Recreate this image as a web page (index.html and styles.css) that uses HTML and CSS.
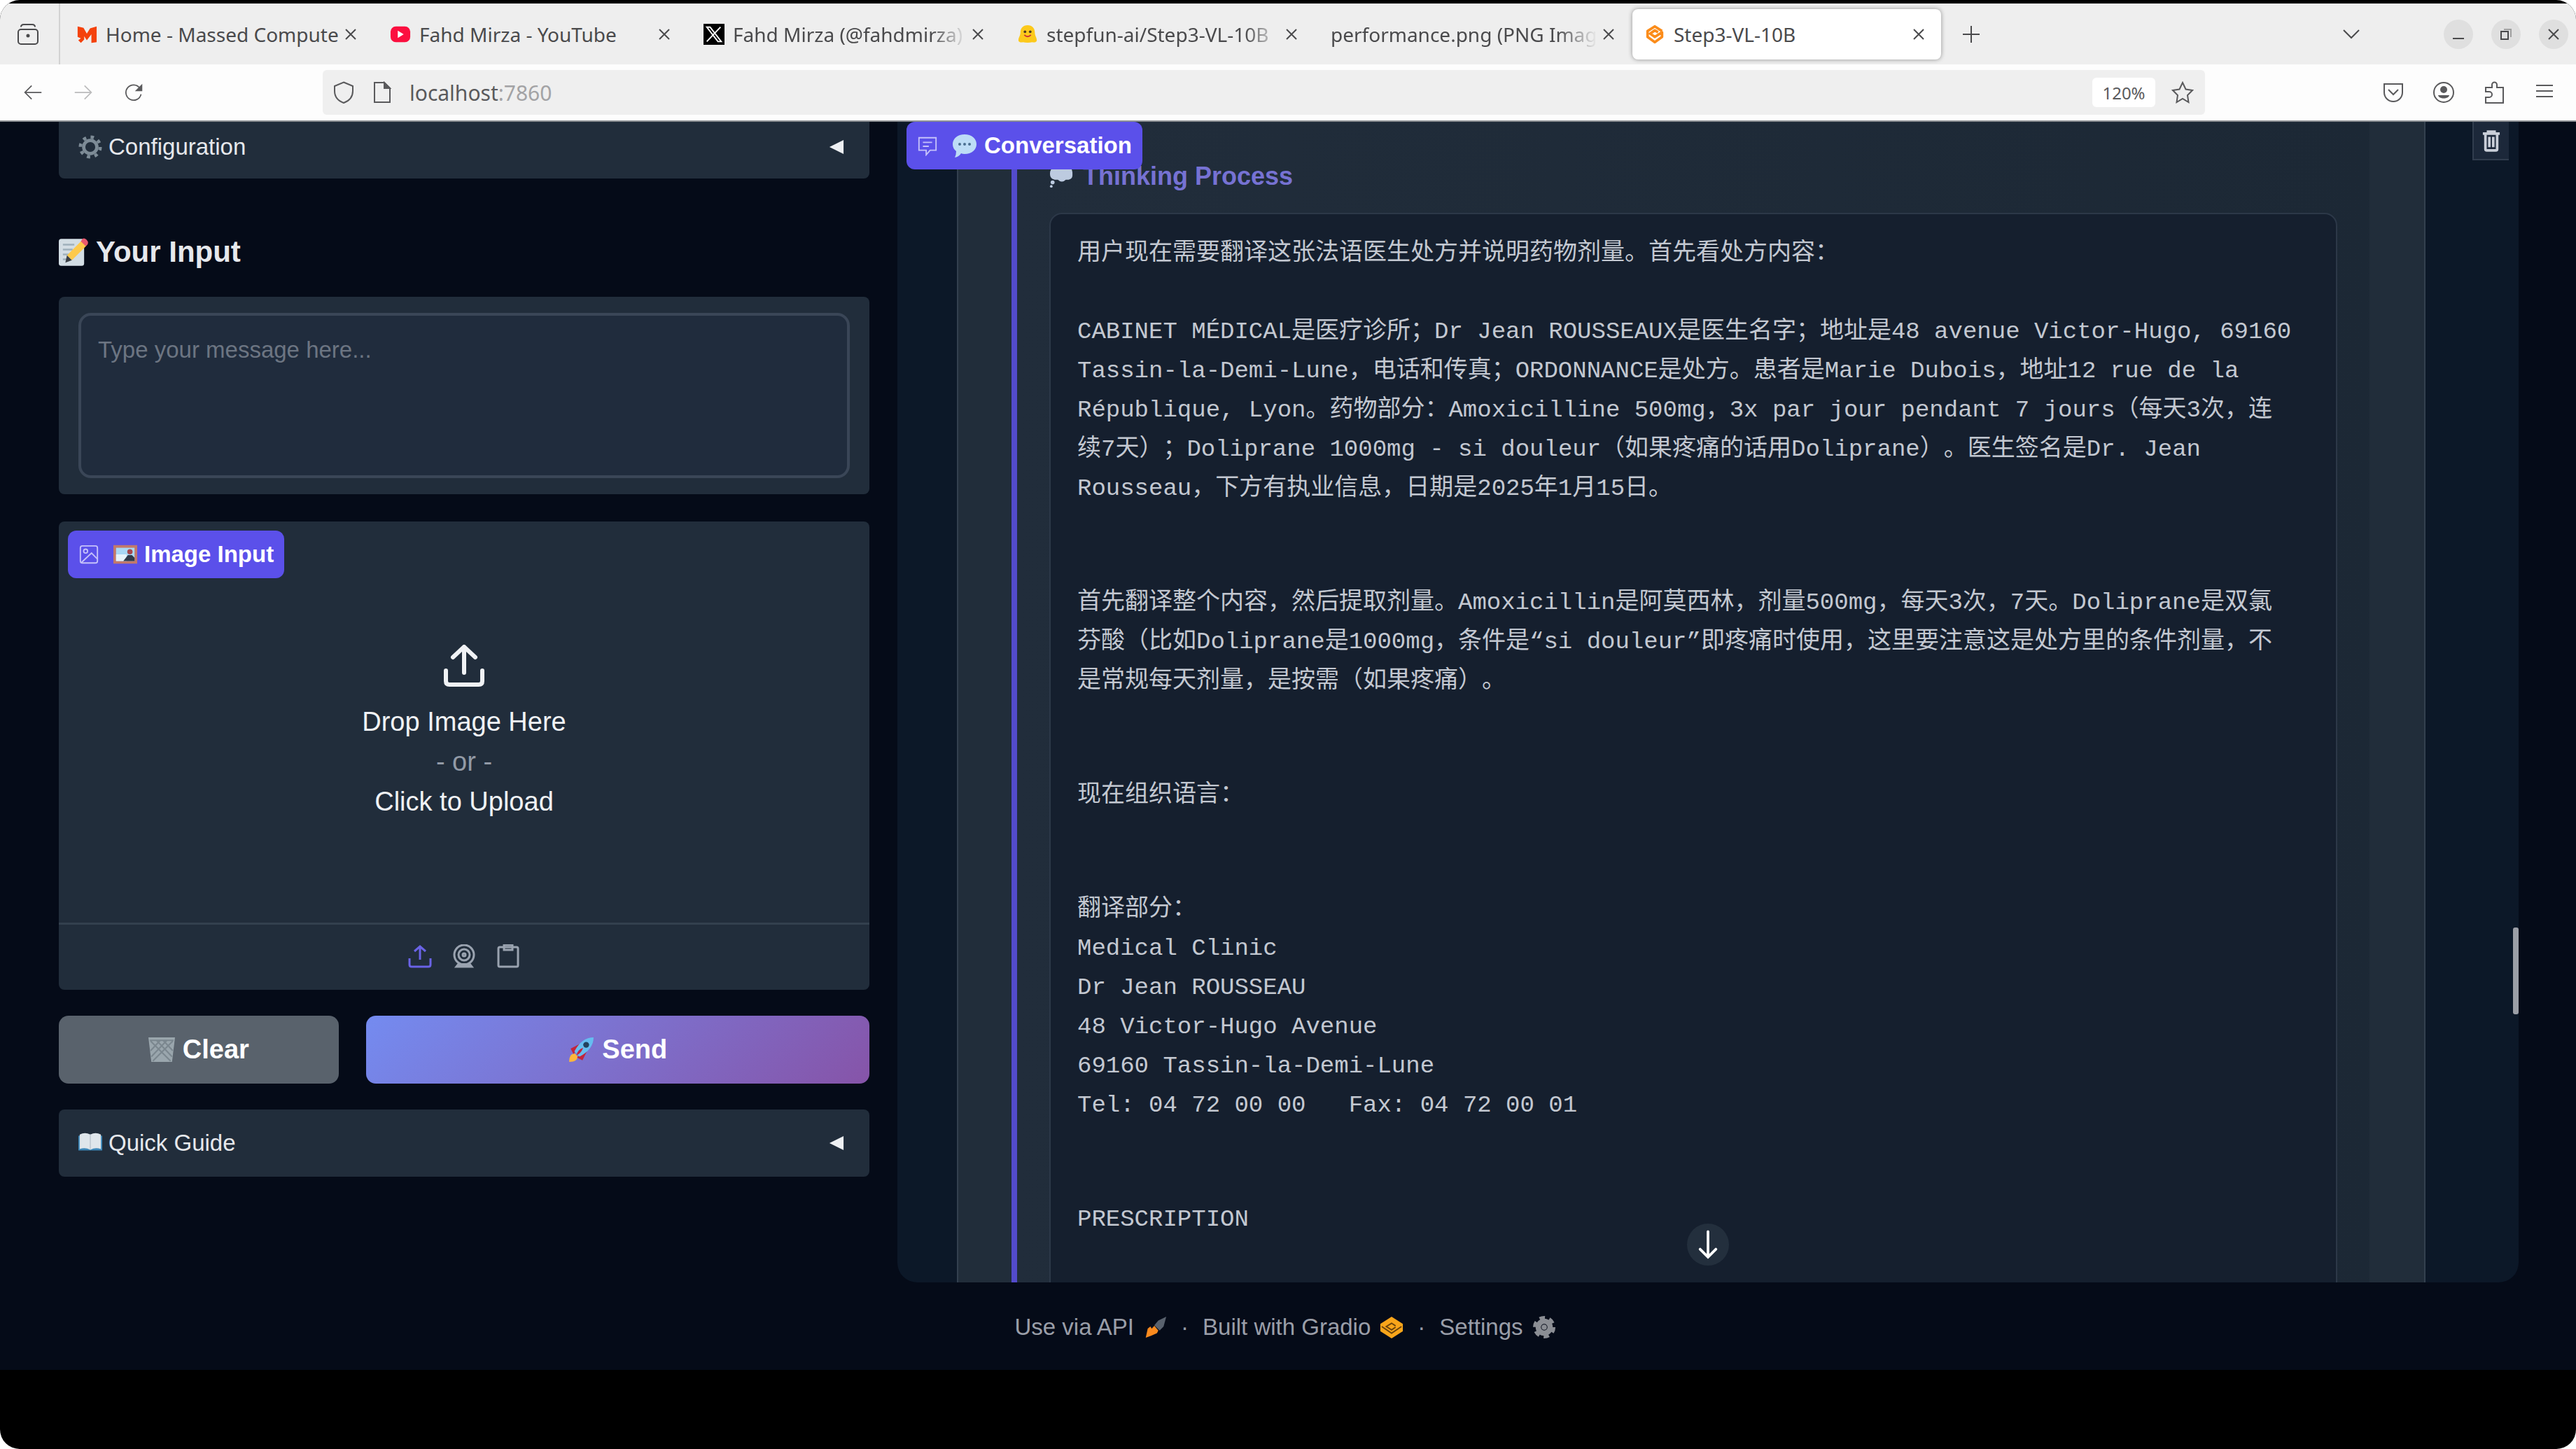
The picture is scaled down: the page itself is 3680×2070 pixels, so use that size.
FILE: index.html
```html
<!DOCTYPE html>
<html lang="en">
<head>
  <meta charset="UTF-8">
  <title>Step3-VL-10B</title>
  <meta name="viewport" content="width=device-width, initial-scale=1.0">
  <link rel="stylesheet" href="styles.css">
</head>
<body>
<div class="screen">

  <!-- Browser tabs -->
  <nav class="tab-bar">
    <button class="view-btn" aria-label="Recent browsing">
      <svg class="icon" viewBox="0 0 32 32"><rect x="2" y="9" width="28" height="21" rx="4"/><path d="M6 5.500Q6 2 10 2h12q4 0 4 3.500"/><circle cx="16" cy="18" r="1.500" fill="currentColor"/></svg>
    </button>
    <div class="tabs">
      <div class="tab">
        <svg class="favicon" viewBox="0 0 32 32"><path fill="#f4420c" d="M2 4l9 2 5 9 5-8 10-3v24l-8 1V16l-7 9-4-6v5l-5 5-4-4 4-3-5-2z"/></svg>
        <span class="tab-title">Home - Massed Compute</span>
        <button class="tab-close" aria-label="Close tab"><svg class="icon" viewBox="0 0 16 16"><path d="M1 1l14 14M15 1L1 15"/></svg></button>
      </div>
      <div class="tab">
        <svg class="favicon" viewBox="0 0 32 32"><rect x="1" y="4" width="30" height="24" rx="8" fill="#fb0f3f"/><path fill="#fff" d="M12 10.500v11l9-5.500z"/></svg>
        <span class="tab-title">Fahd Mirza - YouTube</span>
        <button class="tab-close" aria-label="Close tab"><svg class="icon" viewBox="0 0 16 16"><path d="M1 1l14 14M15 1L1 15"/></svg></button>
      </div>
      <div class="tab">
        <svg class="favicon" viewBox="0 0 32 32"><rect width="32" height="32"/><path fill="none" stroke="#fff" stroke-width="2" d="M5 5h5l17 22h-5zM26 5L5 27"/></svg>
        <span class="tab-title fade">Fahd Mirza (@fahdmirza)</span>
        <button class="tab-close" aria-label="Close tab"><svg class="icon" viewBox="0 0 16 16"><path d="M1 1l14 14M15 1L1 15"/></svg></button>
      </div>
      <div class="tab">
        <svg class="favicon" viewBox="0 0 32 32"><path fill="#fcc91b" d="M16 2c7 0 11 5 11 11 0 5 3 8 3 12 0 3-4 4-7 3-4 1-10 1-14 0-3 1-7 0-7-3 0-4 3-7 3-12C5 7 9 2 16 2z"/><circle cx="12" cy="12" r="2" fill="#4a3a20"/><circle cx="20" cy="12" r="2" fill="#4a3a20"/><path d="M11 17q5 5 10 0" fill="none" stroke="#c33" stroke-width="2"/></svg>
        <span class="tab-title fade">stepfun-ai/Step3-VL-10B</span>
        <button class="tab-close" aria-label="Close tab"><svg class="icon" viewBox="0 0 16 16"><path d="M1 1l14 14M15 1L1 15"/></svg></button>
      </div>
      <div class="tab">
        <span class="tab-title fade">performance.png (PNG Imag</span>
        <button class="tab-close" aria-label="Close tab"><svg class="icon" viewBox="0 0 16 16"><path d="M1 1l14 14M15 1L1 15"/></svg></button>
      </div>
      <div class="tab active">
        <svg class="favicon" viewBox="0 0 32 32"><path fill="none" stroke="#fb8c1a" stroke-width="4" stroke-linejoin="round" d="M27 11L16 4 5 11v9l11 8 11-8v-7l-11 7-7-5 7-5 5 3"/></svg>
        <span class="tab-title">Step3-VL-10B</span>
        <button class="tab-close" aria-label="Close tab"><svg class="icon" viewBox="0 0 16 16"><path d="M1 1l14 14M15 1L1 15"/></svg></button>
      </div>
    </div>
    <button class="new-tab" aria-label="New tab"><svg class="icon" viewBox="0 0 24 24"><path d="M12 0v24M0 12h24"/></svg></button>
    <div class="window-btns">
      <button class="list-tabs" aria-label="List all tabs"><svg class="icon" viewBox="0 0 24 14"><path d="M1 1l11 11L23 1"/></svg></button>
      <button class="round" aria-label="Minimize"><svg class="icon" viewBox="0 0 16 16"><path d="M0 14h16"/></svg></button>
      <button class="round" aria-label="Restore"><svg class="icon" viewBox="0 0 16 16"><path d="M1 4h10v11H1z"/><path stroke="#a0a0a0" d="M5 1h10v11"/></svg></button>
      <button class="round" aria-label="Close"><svg class="icon" viewBox="0 0 16 16"><path d="M1 1l14 14M15 1L1 15"/></svg></button>
    </div>
  </nav>

  <!-- Address bar -->
  <div class="toolbar">
    <div class="nav-btns">
      <button aria-label="Back"><svg class="icon" viewBox="0 0 32 32"><path d="M30 16H3M14 5L3 16l11 11"/></svg></button>
      <button aria-label="Forward" disabled><svg class="icon" viewBox="0 0 32 32"><path d="M2 16h27M18 5l11 11-11 11"/></svg></button>
      <button aria-label="Reload"><svg class="icon" viewBox="0 0 32 32"><path d="M26 9A12.500 12.500 0 1 0 28 19"/><path fill="currentColor" stroke="none" d="M30 2v12H18z"/></svg></button>
    </div>
    <div class="url-bar">
      <svg class="icon" viewBox="0 0 32 32"><path d="M16 1.500L29 7v7c0 8-5 14-13 17C8 28 3 22 3 14V7z"/></svg>
      <svg class="icon" viewBox="0 0 32 32"><path d="M5 2h14l8 8v20H5z"/><path fill="currentColor" d="M19 2v8h8z"/></svg>
      <label class="url">localhost<input type="text" value=":7860" aria-label="Address"></label>
      <button class="zoom-level">120%</button>
      <svg class="icon" viewBox="0 0 32 32"><path d="M16 2l4.500 9.500L30 13l-7 7 1.500 10L16 25l-8.500 5L9 20l-7-7 9.500-1.500z"/></svg>
    </div>
    <div class="tool-btns">
      <button aria-label="Save to Pocket"><svg class="icon" viewBox="0 0 32 32"><path d="M3 4h26v12a13 13 0 0 1-26 0z"/><path d="M9 12l7 7 7-7"/></svg></button>
      <button aria-label="Account"><svg class="icon" viewBox="0 0 32 32"><circle cx="16" cy="16" r="14"/><circle cx="16" cy="12" r="5" fill="currentColor" stroke="none"/><path fill="currentColor" stroke="none" d="M8 20h16c-1 6-15 6-16 0z"/></svg></button>
      <button aria-label="Extensions"><svg class="icon" viewBox="0 0 32 32"><path d="M4 9h9V5a3.500 3.500 0 0 1 7 0v4h9v22H4v-8h5a4 4 0 0 0 0-8H4z"/></svg></button>
      <button aria-label="Menu"><svg class="icon" viewBox="0 0 32 32"><path d="M4 6h24M4 14h24M4 22h24"/></svg></button>
    </div>
  </div>

  <main class="page">
    <div class="columns">

      <!-- Left column -->
      <section class="left">
        <button class="accordion top">
          <svg class="emoji" viewBox="0 0 36 36"><circle cx="18" cy="18" r="10" fill="none" stroke="#7d8b96" stroke-width="5"/><circle cx="18" cy="18" r="15" fill="none" stroke="#7d8b96" stroke-width="5" stroke-dasharray="5 6.780"/></svg>
          <span>Configuration</span>
          <svg class="arrow" viewBox="0 0 24 24"><path d="M23 1v22L1 12z"/></svg>
        </button>

        <h2>
          <svg class="emoji big" viewBox="0 0 36 36"><rect x="0" y="2" width="31" height="33" rx="3" fill="#d3dde4"/><path stroke="#9fb0bb" stroke-width="2" d="M5 9h14M5 15h12M5 21h8M5 27h8"/><path fill="#fdc94b" d="M28 4l6 6-18 18-6-6z"/><path fill="#e8596e" d="M29 2q2-2 5 1t1 6l-2 2-6-6z"/><path fill="#3b3f45" d="M10 22l6 6-8 3z"/></svg>
          Your Input
        </h2>

        <div class="message-box">
          <textarea aria-label="Your message" placeholder="Type your message here..."></textarea>
        </div>

        <div class="image-box">
          <div class="badge">
            <svg class="icon" viewBox="0 0 32 32"><rect x="3" y="3" width="26" height="26" rx="3"/><circle cx="11" cy="11" r="3"/><path d="M5 28l15-14 9 9"/></svg>
            <svg class="emoji" viewBox="0 0 36 36"><rect x="0" y="4" width="36" height="28" fill="#c2796b"/><rect x="4" y="8" width="28" height="20" fill="#a9d8f5"/><path fill="#e6f4fb" d="M4 18h16v10H4z"/><circle cx="25" cy="14" r="4" fill="#a5484e"/><path fill="#2f3a4a" d="M15 28l7-9h6l4 4v5z"/></svg>
            <span>Image Input</span>
          </div>
          <button class="drop">
            <svg class="icon" viewBox="0 0 60 60"><path d="M30 40V4M14 18L30 3l16 15M4 37v15q0 5 5 5h42q5 0 5-5V37"/></svg>
            <span>Drop Image Here</span>
            <span class="or">- or -</span>
            <span>Click to Upload</span>
          </button>
          <div class="sources">
            <button class="selected" aria-label="Upload file"><svg class="icon" viewBox="0 0 34 34"><path d="M17 22V3M9 10l8-7 8 7M2 20v9q0 3 3 3h24q3 0 3-3v-9"/></svg></button>
            <button aria-label="Webcam"><svg class="icon" viewBox="0 0 34 34"><circle cx="17" cy="15" r="14"/><circle cx="17" cy="15" r="8"/><circle cx="17" cy="15" r="2"/><path d="M10 27l-4 5h22l-4-5" fill="currentColor"/></svg></button>
            <button aria-label="Paste from clipboard"><svg class="icon" viewBox="0 0 34 34"><rect x="3" y="4" width="28" height="28" rx="2"/><path d="M11 1h12v7H11z"/></svg></button>
          </div>
        </div>

        <div class="actions">
          <button class="clear-btn">
            <svg class="emoji" viewBox="0 0 36 36"><path fill="#9aa6ad" d="M0 1h36l-4 33H4z"/><path fill="none" stroke="#7b878f" stroke-width="2" d="M3 6l27 27M11 5l21 22M20 5l13 14M33 6L6 33M25 5L4 27M16 5L3 19M2 5h32"/></svg>
            Clear
          </button>
          <button class="send-btn">
            <svg class="emoji" viewBox="0 0 36 36"><path fill="#c2253c" d="M4 16l12-6-8 14zM20 32l6-12-14 8z"/><path fill="#fdb63c" d="M2 34q0-12 8-11l3 3q1 8-11 8z"/><path fill="#66bdf0" d="M35 1q-16 0-26 19l7 7Q35 17 35 1z"/><path fill="#c2253c" d="M12 25q1-7 9-10-3 8-9 10z"/><circle cx="25" cy="11" r="4" fill="#22425f"/></svg>
            Send
          </button>
        </div>

        <button class="accordion">
          <svg class="emoji" viewBox="0 0 36 36"><path fill="#3d87b8" d="M0 7h36v22H0z"/><path fill="#dfe6eb" d="M2 5q8-4 16 0 8-4 16 0v22q-8-3-16 1-8-4-16-1z"/><path stroke="#c3cdd5" stroke-width="2" d="M18 5v22"/></svg>
          <span>Quick Guide</span>
          <svg class="arrow" viewBox="0 0 24 24"><path d="M23 1v22L1 12z"/></svg>
        </button>
      </section>

      <!-- Conversation -->
      <section class="chat">
        <div class="message">
          <div class="thinking">
            <h3>
              <svg class="emoji" viewBox="0 0 36 36"><path fill="#bdcbe0" d="M8 4q9-6 16 0 12-1 11 10 1 10-10 9-6 6-12 0Q1 24 1 14 1 6 8 4z"/><circle cx="5" cy="27" r="3" fill="#bdcbe0"/><circle cx="3" cy="33" r="2" fill="#bdcbe0"/></svg>
              Thinking Process
            </h3>
            <div class="thoughts">
              <p>用户现在需要翻译这张法语医生处方并说明药物剂量。首先看处方内容：<br><br>CABINET MÉDICAL是医疗诊所；Dr Jean ROUSSEAUX是医生名字；地址是48 avenue Victor-Hugo, 69160<br>Tassin-la-Demi-Lune，电话和传真；ORDONNANCE是处方。患者是Marie Dubois，地址12 rue de la<br>République, Lyon。药物部分：Amoxicilline 500mg，3x par jour pendant 7 jours（每天3次，连<br>续7天）；Doliprane 1000mg - si douleur（如果疼痛的话用Doliprane）。医生签名是Dr. Jean<br>Rousseau，下方有执业信息，日期是2025年1月15日。</p>
              <p>首先翻译整个内容，然后提取剂量。Amoxicillin是阿莫西林，剂量500mg，每天3次，7天。Doliprane是双氯<br>芬酸（比如Doliprane是1000mg，条件是“si douleur”即疼痛时使用，这里要注意这是处方里的条件剂量，不<br>是常规每天剂量，是按需（如果疼痛）。</p>
              <p>现在组织语言：</p>
              <p>翻译部分：<br>Medical Clinic<br>Dr Jean ROUSSEAU<br>48 Victor-Hugo Avenue<br>69160 Tassin-la-Demi-Lune<br>Tel: 04 72 00 00 &nbsp; Fax: 04 72 00 01</p>
              <p>PRESCRIPTION</p>
            </div>
          </div>
        </div>

        <div class="badge chat-label">
          <svg class="icon" viewBox="0 0 32 32"><path d="M3 4h26v19h-9l-6 7v-7H3z"/><path d="M9 11h14M9 17h9"/></svg>
          <svg class="emoji" viewBox="0 0 36 36"><path fill="#bddcf6" d="M18 2c10 0 17 6 17 14s-7 14-17 14q-3 0-5-1-3 5-9 6 2-4 2-9-5-4-5-10C1 8 8 2 18 2z"/><g fill="#4b6f92"><circle cx="11" cy="16" r="2"/><circle cx="18" cy="16" r="2"/><circle cx="25" cy="16" r="2"/></g></svg>
          <span>Conversation</span>
        </div>
        <button class="trash" aria-label="Clear conversation"><svg viewBox="0 0 28 34"><path fill="none" stroke="#c9ced8" stroke-width="4" d="M1 6h26M9 5V3h10v2M5 7v23q0 2 2 2h14q2 0 2-2V7M11 11v16M17 11v16"/></svg></button>
        <button class="scroll-down" aria-label="Scroll to bottom"><svg class="icon" viewBox="0 0 32 44"><path d="M16 2v38M4 29l12 12 12-12"/></svg></button>
        <div class="scrollbar"></div>
      </section>
    </div>

    <footer>
      <a href="#">Use via API
        <svg class="emoji" viewBox="0 0 36 36"><path fill="#fb8a1e" d="M4 34l3-14 4-3 2 3 4-4 6 7-2 4-9 4z"/><path fill="#59626e" d="M35 2l-4 15-6 6-8-8 6-7z"/></svg>
      </a>
      <span>·</span>
      <a href="#">Built with Gradio
        <svg class="emoji" viewBox="0 0 36 36"><path fill="#f9a51a" d="M18 2l17 11v11L18 35 1 24V13z"/><path fill="none" stroke="#6b430b" stroke-width="2" d="M3 17l15 10 15-10M24 16l-6-4-8 5 8 5 6-4"/></svg>
      </a>
      <span>·</span>
      <a href="#">Settings
        <svg class="emoji" viewBox="0 0 36 36"><circle cx="18" cy="18" r="9" fill="none" stroke="#8b8e94" stroke-width="8"/><circle cx="18" cy="18" r="14" fill="none" stroke="#8b8e94" stroke-width="6" stroke-dasharray="8 6.660"/><circle cx="18" cy="18" r="4" fill="#8b8e94"/></svg>
      </a>
    </footer>
  </main>

</div>
</body>
</html>
```
FILE: styles.css
```css
* {
  box-sizing: border-box;
}
body {
  margin: 0;
  background: #fff;
  font-family: "Liberation Sans", Arial, sans-serif;
}
h2, h3, p {
  margin: 0;
}
button {
  margin: 0;
  padding: 0;
  border: none;
  background: none;
  font-family: inherit;
  color: inherit;
  cursor: pointer;
}
svg {
  display: block;
  flex: none;
}
.icon {
  width: 32px;
  height: 32px;
  fill: none;
  stroke: currentColor;
  stroke-width: 2;
}
.emoji {
  width: 34px;
  height: 34px;
}
.screen {
  display: flex;
  flex-direction: column;
  height: 100vh;
  padding: 5px 0 113px;
  background: #000;
  border-radius: 28px;
  overflow: hidden;
}

/* Tabs */
.tab-bar {
  display: flex;
  align-items: center;
  height: 87px;
  background: #eee;
  color: #4a4a4c;
  font-family: "Noto Sans", sans-serif;
  font-size: 28px;
}
.view-btn {
  display: flex;
  align-items: center;
  justify-content: flex-end;
  width: 86px;
  height: 100%;
  padding-right: 28px;
  border-right: 2px solid #d2d2d2;
}
.tabs {
  display: flex;
  gap: 7px;
  padding-left: 6px;
}
.tab {
  display: flex;
  align-items: center;
  flex: 0 1 441px;
  width: 441px;
  min-width: 0;
  height: 72px;
  padding: 0 24px 0 17px;
  border-radius: 8px;
}
.tab.active {
  background: #fff;
  box-shadow: 0 0 6px rgba(0, 0, 0, 0.4);
}
.favicon {
  width: 30px;
  height: 30px;
  margin-right: 12px;
}
.tab-title {
  flex: 1;
  white-space: nowrap;
}
.tab-title.fade {
  -webkit-mask-image: linear-gradient(to right, #000 85%, transparent);
  mask-image: linear-gradient(to right, #000 85%, transparent);
}
.tab-close {
  margin-left: 8px;
}
.tab-close .icon {
  width: 16px;
  height: 16px;
}
.new-tab {
  margin-left: 31px;
}
.new-tab .icon {
  width: 24px;
  height: 24px;
}
.window-btns {
  display: flex;
  align-items: center;
  gap: 26px;
  margin-left: auto;
  padding-right: 11px;
}
.list-tabs {
  margin-right: 94px;
}
.list-tabs .icon {
  width: 24px;
  height: 14px;
}
.round {
  display: flex;
  align-items: center;
  justify-content: center;
  width: 42px;
  height: 42px;
  border-radius: 50%;
  background: #dfdfdf;
}
.round .icon {
  width: 16px;
  height: 16px;
}

/* Toolbar */
.toolbar {
  display: flex;
  align-items: center;
  height: 82px;
  background: #fdfdfd;
  border-bottom: 2px solid #8c8f93;
  color: #5a5a5c;
}
.nav-btns {
  display: flex;
  gap: 40px;
  width: 461px;
  padding-left: 31px;
}
.nav-btns button:disabled {
  opacity: 0.4;
}
.nav-btns .icon {
  width: 32px;
  height: 28px;
}
.url-bar {
  display: flex;
  align-items: center;
  flex: 1;
  height: 64px;
  padding: 0 16px 0 14px;
  gap: 23px;
  background: #efefef;
  border-radius: 6px;
  font-family: "Noto Sans", sans-serif;
}
.url {
  display: flex;
  align-items: center;
  flex: 1;
  font-size: 30px;
}
.url input {
  flex: 1;
  padding: 0;
  border: none;
  outline: none;
  background: none;
  font: inherit;
  color: #a3a3a5;
}
.zoom-level {
  width: 90px;
  height: 42px;
  background: #fff;
  border-radius: 6px;
  font-size: 24px;
}
.tool-btns {
  display: flex;
  gap: 40px;
  padding: 0 29px 0 253px;
}

/* Page */
.page {
  display: flex;
  flex-direction: column;
  flex: 1;
  min-height: 0;
  background: #050b18;
  color: #e6e8ec;
}
.columns {
  display: grid;
  grid-template-columns: minmax(0, 1fr) minmax(0, 2fr);
  gap: 40px;
  flex: 1;
  min-height: 0;
  padding: 0 82px 0 84px;
}
.left {
  display: flex;
  flex-direction: column;
}
.accordion {
  display: flex;
  align-items: center;
  gap: 9px;
  height: 96px;
  padding: 0 36px 0 28px;
  background: #212d3b;
  border-radius: 8px;
  font-size: 33px;
}
.accordion.top {
  height: 81px;
  padding-bottom: 10px;
  border-radius: 0 0 8px 8px;
}
.arrow {
  width: 22px;
  height: 22px;
  margin-left: auto;
  fill: #eef0f3;
}
.left h2 {
  display: flex;
  align-items: center;
  gap: 11px;
  height: 48px;
  margin: 81px 0 40px;
  font-size: 42px;
}
.emoji.big {
  width: 42px;
  height: 42px;
}
.message-box {
  padding: 23px 28px;
  background: #212d3b;
  border-radius: 8px;
}
.message-box textarea {
  display: block;
  width: 100%;
  height: 236px;
  padding: 30px 24px;
  background: #202c3d;
  border: 4px solid #3a4657;
  border-radius: 18px;
  outline: none;
  resize: none;
  color: #e6e8ec;
  font-family: inherit;
  font-size: 33px;
}
.message-box textarea::placeholder {
  color: #6c7582;
}
.image-box {
  position: relative;
  display: flex;
  flex-direction: column;
  height: 669px;
  margin-top: 39px;
  background: #212d3b;
  border-radius: 8px;
}
.badge {
  position: absolute;
  top: 13px;
  left: 13px;
  display: flex;
  align-items: center;
  height: 68px;
  padding: 0 15px;
  background: #5b50ea;
  border-radius: 12px;
  color: #fff;
  font-size: 33px;
  font-weight: bold;
}
.badge .icon {
  width: 30px;
  height: 30px;
  margin-right: 20px;
  color: #c5c1fa;
}
.badge .emoji {
  margin-right: 10px;
}
.drop {
  display: flex;
  flex-direction: column;
  align-items: center;
  flex: 1;
  padding-top: 176px;
  color: #f0f2f5;
  font-size: 38px;
  line-height: 57px;
}
.drop .icon {
  width: 60px;
  height: 60px;
  margin-bottom: 22px;
  stroke-width: 6;
  stroke-linecap: round;
}
.drop .or {
  color: #929aa6;
}
.sources {
  display: flex;
  align-items: center;
  justify-content: center;
  gap: 29px;
  height: 96px;
  padding-bottom: 3px;
  border-top: 3px solid #33404e;
  color: #9aa3b0;
}
.sources .selected {
  color: #6a63e6;
}
.sources .icon {
  width: 34px;
  height: 34px;
  stroke-width: 3;
}
.actions {
  display: flex;
  gap: 39px;
  margin: 37px 0;
}
.clear-btn, .send-btn {
  display: flex;
  align-items: center;
  justify-content: center;
  gap: 11px;
  height: 97px;
  border-radius: 14px;
  color: #fff;
  font-size: 38px;
  font-weight: bold;
}
.actions .emoji {
  width: 38px;
  height: 38px;
}
.clear-btn {
  flex: 5;
  background: #59626c;
}
.send-btn {
  flex: 9;
  background: linear-gradient(135deg, #748bf0 0%, #8654a8 100%);
}

/* Conversation */
.chat {
  position: relative;
  background: #0c1828;
  border-radius: 0 0 28px 28px;
  overflow: hidden;
}
.message {
  height: 100%;
  margin: 0 133px 0 85px;
  padding: 0 78px 0 76px;
  background: #212d3a;
  border: solid #33404f;
  border-width: 0 2px;
}
.thinking {
  height: 100%;
  padding: 54px 46px 0 46px;
  border-left: 8px solid #534bcb;
  background: linear-gradient(to right, #212d3b, #1c2835);
}
.thinking h3 {
  display: flex;
  align-items: center;
  gap: 14px;
  height: 48px;
  margin-bottom: 28px;
  color: #7672d3;
  font-size: 36px;
}
.thoughts {
  display: flex;
  flex-direction: column;
  gap: 107px;
  height: 100%;
  padding: 28px 38px;
  background: #151f2e;
  border: 2px solid #2c3848;
  border-radius: 18px;
  color: #c3c8d1;
  font-family: "Liberation Mono", "Noto Sans CJK SC", monospace;
  font-size: 34px;
  line-height: 56px;
  white-space: nowrap;
  text-spacing-trim: space-all;
}
.chat-label {
  top: 0;
}
.chat-label .emoji {
  width: 36px;
  height: 36px;
}
.trash {
  position: absolute;
  top: 0;
  right: 14px;
  width: 52px;
  height: 55px;
  padding-left: 12px;
  background: #1c283a;
  border: solid #313d4e;
  border-width: 0 0 2px 2px;
}
.trash svg {
  width: 26px;
  height: 34px;
}
.scroll-down {
  position: absolute;
  bottom: 24px;
  left: 50%;
  display: flex;
  align-items: center;
  justify-content: center;
  width: 60px;
  height: 60px;
  margin-left: -30px;
  background: #232f3d;
  border-radius: 50%;
  color: #fff;
}
.scroll-down .icon {
  width: 30px;
  height: 42px;
  stroke-width: 4;
  stroke-linecap: round;
}
.scrollbar {
  position: absolute;
  top: 1151px;
  right: 0;
  width: 8px;
  height: 124px;
  background: #9b9ea6;
  border-radius: 3px;
}

footer {
  display: flex;
  align-items: center;
  justify-content: center;
  gap: 20px;
  height: 125px;
  padding: 3px 8px 0 0;
  color: #9a9ea8;
  font-size: 33px;
}
footer a {
  display: flex;
  align-items: center;
  gap: 13px;
  color: inherit;
  text-decoration: none;
}
```
